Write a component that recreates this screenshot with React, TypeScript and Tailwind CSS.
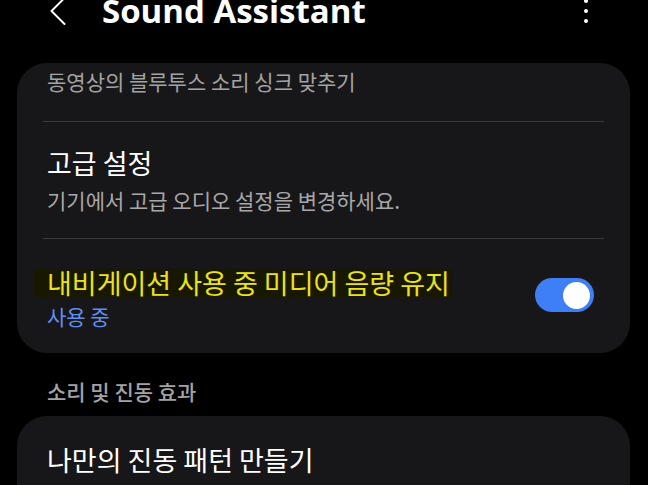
const ko = { fontFamily: '"Noto Sans CJK KR", "Noto Sans", sans-serif' };

export default function App() {
  return (
    <div className="w-[648px] h-[485px] overflow-hidden bg-black text-white" style={ko}>
      {/* top bar, scrolled so its upper part is cut off */}
      <div className="h-[46px] -mt-[12px] flex items-center relative">
        <svg
          className="ml-[32px] w-[52px] h-[52px] shrink-0"
          viewBox="0 0 24 24"
          fill="none"
          stroke="white"
          strokeWidth={0.9}
          strokeLinecap="round"
          strokeLinejoin="round"
        >
          <path d="M15 18 9 12l6-6" />
        </svg>
        <div
          className="ml-[18px] text-[33px] leading-[44px] font-bold"
          style={{ fontFamily: '"Open Sans", Roboto, sans-serif' }}
        >
          Sound Assistant
        </div>
        <div className="absolute left-[584px] top-[11px] flex flex-col gap-[6px]">
          <span className="w-[4px] h-[4px] rounded-full bg-white" />
          <span className="w-[4px] h-[4px] rounded-full bg-white" />
          <span className="w-[4px] h-[4px] rounded-full bg-white" />
        </div>
      </div>

      <div className="h-[29px]" />

      {/* card 1 */}
      <div className="mx-[17px] w-[613px] rounded-[30px] bg-[#171719]">
        <div className="px-[30px] pt-[4px] pb-[26px] text-[21px] leading-[28px] text-[#a3a3a3]">
          동영상의 블루투스 소리 싱크 맞추기
        </div>
        <div className="mx-[26px] h-px bg-[#3b3b3d]" />
        <div className="px-[30px] pt-[24px] pb-[24px]">
          <div className="text-[27px] leading-[34px] text-white">고급 설정</div>
          <div className="mt-[6px] text-[21px] leading-[28px] text-[#a8a8a8]">
            기기에서 고급 오디오 설정을 변경하세요.
          </div>
        </div>
        <div className="mx-[26px] h-px bg-[#3b3b3d]" />
        <div className="pl-[30px] pr-[36px] pt-[27px] pb-[23px] flex items-center">
          <div className="flex-1">
            <div className="text-[27px] leading-[34px]">
              <span className="-ml-[13px] pl-[13px] pr-[2px] inline-block leading-[28px] bg-[#181800] text-[#ece21c]">
                내비게이션 사용 중 미디어 음량 유지
              </span>
            </div>
            <div className="mt-[2px] text-[21px] leading-[28px] text-[#5f8ff0]">사용 중</div>
          </div>
          <div className="-mt-[6px] w-[59px] h-[34px] rounded-full bg-[#3e7ff5] flex items-center justify-end pr-[4px]">
            <span className="w-[27px] h-[27px] rounded-full bg-white" />
          </div>
        </div>
      </div>

      {/* section header */}
      <div className="mt-[24px] px-[47px] text-[21px] leading-[28px] font-medium text-[#a3a3a3]">
        소리 및 진동 효과
      </div>

      {/* card 2 */}
      <div className="mt-[11px] mx-[17px] w-[613px] h-[120px] rounded-t-[30px] bg-[#171719]">
        <div className="px-[30px] pt-[27px] text-[27px] leading-[34px] text-white">나만의 진동 패턴 만들기</div>
      </div>
    </div>
  );
}
